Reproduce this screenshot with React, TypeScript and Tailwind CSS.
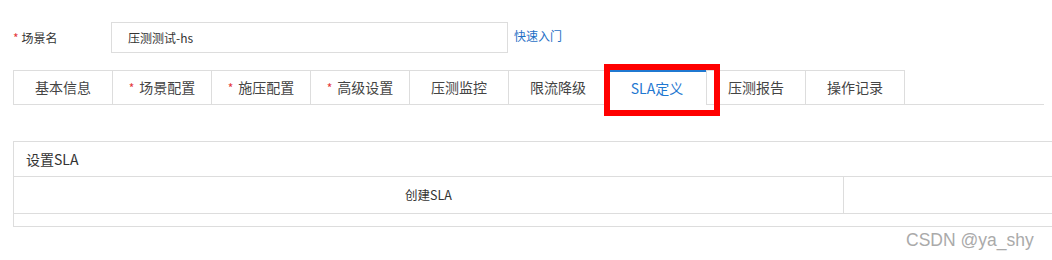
import React from "react";

const tabs: { label: string; req?: boolean; active?: boolean }[] = [
  { label: "基本信息" },
  { label: "场景配置", req: true },
  { label: "施压配置", req: true },
  { label: "高级设置", req: true },
  { label: "压测监控" },
  { label: "限流降级" },
  { label: "SLA定义", active: true },
  { label: "压测报告" },
  { label: "操作记录" },
];

export default function App() {
  return (
    <div
      className="relative w-[1052px] h-[260px] overflow-hidden bg-white text-[#333]"
      style={{ fontFamily: '"Noto Sans CJK SC", "Noto Sans", sans-serif' }}
    >
      {/* cut-off title */}
      <div className="h-[22px] pl-[56px]">
        <div className="-translate-y-[17px] text-[16px] leading-[16px] text-[#aaa]">编辑场景信息</div>
      </div>

      {/* form row */}
      <div className="flex items-center h-[31px]">
        <div className="w-[111px] pl-[13px] text-[12px] leading-[16px]">
          <span className="text-[#e4393c]">*</span>
          <span className="ml-[3px]">场景名</span>
        </div>
        <div className="w-[397px] h-[31px] border border-[#ddd] flex items-center pl-[16px] text-[12px] text-[#333]">
          压测测试-hs
        </div>
        <a className="ml-[6px] text-[12px] leading-[16px] text-[#1f6fc5] -mt-[4px]">快速入门</a>
      </div>

      {/* tabs */}
      <div className="relative flex mt-[17px] pl-[13px] h-[35px]">
        {tabs.map((t, i) => (
          <div
            key={t.label}
            className={
              t.active
                ? "w-[100px] h-[35px] -ml-px flex items-center justify-center border border-[#ddd] border-t-2 border-t-[#1f78d1] border-b-white bg-white text-[14px] text-[#1f78d1]"
                : i === 0
                ? "w-[100px] h-[35px] flex items-center justify-center border border-[#ddd] text-[14px] text-[#444]"
                : "w-[100px] h-[35px] -ml-px flex items-center justify-center border border-[#ddd] text-[14px] text-[#444]"
            }
          >
            {t.req && <span className="text-[#e4393c] text-[12px] mr-[5px]">*</span>}
            {t.label}
          </div>
        ))}
        <div className="w-[139px] h-[35px] border-b border-[#ddd]" />
        {/* red highlight box */}
        <div className="absolute left-[604px] top-[-6px] w-[116px] h-[52px] border-[6px] border-[#ff0000]" />
      </div>

      {/* SLA panel */}
      <div className="ml-[13px] mt-[36px] w-[1060px] border border-r-0 border-[#ddd]">
        <div className="h-[35px] border-b border-[#ddd] flex items-center pl-[12px] text-[14px] text-[#333]">
          设置SLA
        </div>
        <div className="flex h-[37px] border-b border-[#ddd]">
          <div className="w-[830px] border-r border-[#ddd] flex items-center justify-center text-[12.5px] text-[#333]">
            创建SLA
          </div>
          <div className="flex-1" />
        </div>
        <div className="h-[12px]" />
      </div>

      {/* watermark */}
      <div
        className="absolute left-[906px] top-[228px] text-[17.5px] leading-[24px] text-[#aaa]"
        style={{ fontFamily: '"Liberation Sans", Arial, sans-serif' }}
      >
        CSDN @ya_shy
      </div>
    </div>
  );
}
